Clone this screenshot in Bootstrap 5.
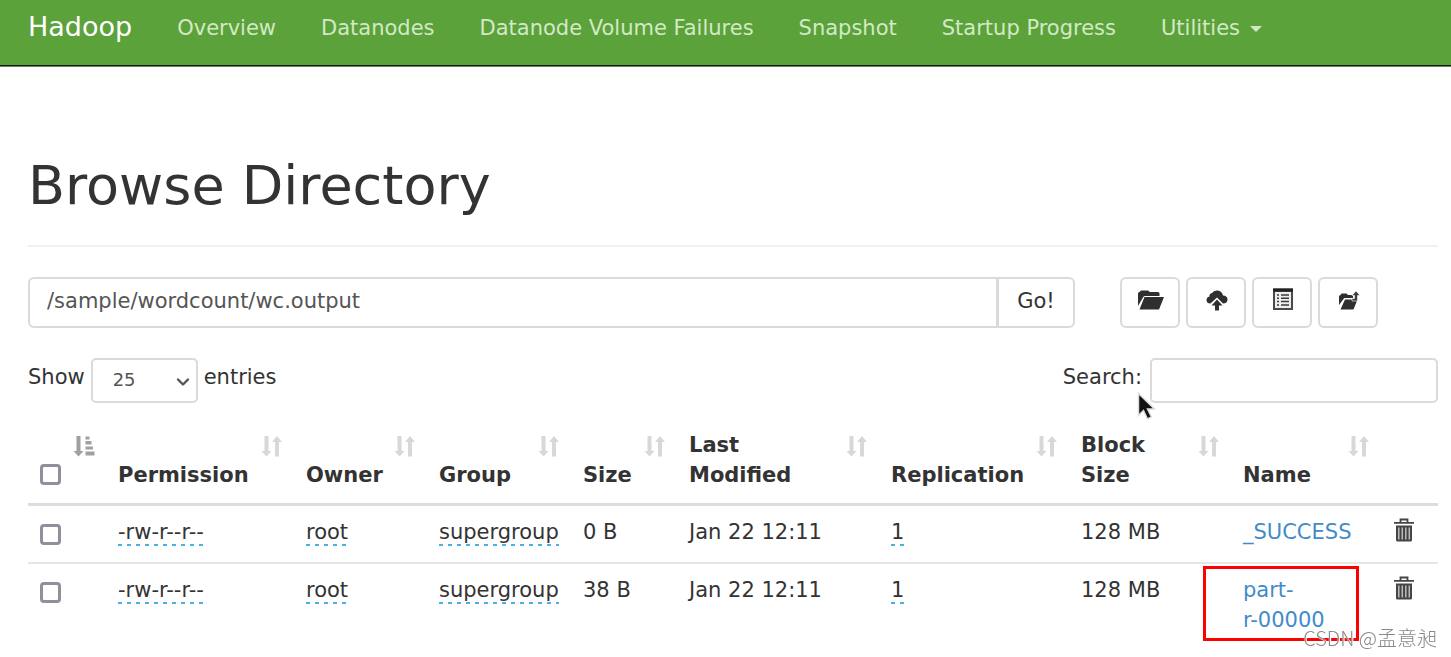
<!DOCTYPE html>
<html lang="en">
<head>
<meta charset="utf-8">
<meta name="viewport" content="width=device-width, initial-scale=1">
<title>Browsing HDFS</title>
<link href="https://cdn.jsdelivr.net/npm/bootstrap@5.3.0/dist/css/bootstrap.min.css" rel="stylesheet">
<style>
  body { font-family: "DejaVu Sans", sans-serif; font-size: 21px; line-height: 30px; color: #333; background: #fff; }
  .page-pad { padding-left: 28px; padding-right: 13px; }
  .topbar { background: #5ca23a; border-bottom: 1px solid #10240a; box-shadow: 0 1px 0 #777; padding-top: 0; padding-bottom: 0; height: 66px; align-items: flex-start; }
  .topbar .navbar-brand { font-size: 27px; line-height: 30px; color: #fff; padding: 12px 0; margin: 0 45px 0 0; }
  .topbar .navbar-nav { gap: 45px; }
  .topbar .navbar-nav .nav-link { color: #d3e9c6; padding: 13px 0; }
  .topbar .dropdown-toggle::after { border-top: 6px solid; border-left: 6px solid transparent; border-right: 6px solid transparent; border-bottom: 0; margin-left: 10px; vertical-align: 3px; }
  h1 { font-size: 54px; line-height: 60px; font-weight: 400; margin: 90px 0 0; padding-bottom: 29px; border-bottom: 2px solid #f0f0f0; }
  .pathbar { display: grid; grid-template-columns: 1047fr 318fr; column-gap: 45px; margin-top: 30px; }
  .pathbar .form-control, .pathbar .btn { height: 51px; font-size: 21px; line-height: 30px; border: 2px solid #dadada; color: #333; border-radius: 6px; background: #fff; }
  .pathbar .form-control { padding: 6px 17px 9px; color: #555; border-top-right-radius: 0; border-bottom-right-radius: 0; }
  .pathbar .go-btn { width: 78px; padding: 6px 0 9px; border-top-left-radius: 0; border-bottom-left-radius: 0; margin-left: -2px; }
  .pathbar .tool-btn { width: 60px; padding: 9px 0 0 2px; display: flex; justify-content: center; }
  .tools { gap: 6px; }
  .filters { margin-top: 30px; line-height: 39px; }
  .filters .form-select, .filters .form-control { height: 45px; font-size: 18px; line-height: 27px; color: #555; border: 2px solid #dadada; border-radius: 5px; background-color: #fff; }
  .filters .form-select { width: 107px; padding: 6px 20px 8px; background-image: none; }
  .filters .form-control { width: 288px; }
  .select-wrap { position: relative; line-height: 0; margin: 0 6px; }
  .select-wrap svg { position: absolute; right: 8px; top: 17px; pointer-events: none; }
  .pointer-arrow { position: absolute; left: 74px; top: 34px; }
  .files { table-layout: fixed; color: #333; margin: 27px 0 0; width: 100%; }
  .files > thead > tr > th { position: relative; vertical-align: bottom; padding: 0 34px 13px 12px; border-bottom: 3px solid #ddd; font-weight: 700; background: none; box-shadow: none; color: #333; }
  .files > tbody > tr > td { vertical-align: top; padding: 11px 8px 15px 12px; border-bottom: 2px solid #e6e6e6; color: #333; box-shadow: none; background: none; white-space: nowrap; }
  .files > tbody > tr:last-child > td { border-bottom: 0; }
  .files > thead > tr > th svg { position: absolute; right: 11px; top: 5px; }
  .files .form-check-input { display: block; width: 21px; height: 21px; margin: 7px 0 0; border: 3px solid #8f8f9d; border-radius: 4px; }
  .files thead .form-check-input { margin: 0 0 5px; }
  .files a { color: #428bca; text-decoration: none; }
  .files .editable { display: inline-block; line-height: 27px; color: #333; padding: 1px 0 0; background: repeating-linear-gradient(90deg, #4bb0e0 0 4px, transparent 4px 9px) 0 100% / 100% 2px no-repeat; }
  .files .name-cell { position: relative; }
  .highlight-box { position: absolute; left: -28px; right: 22px; top: 2px; height: 75px; border: 3px solid #f00; pointer-events: none; }
  .trash-btn { display: block; border: 0; background: none; padding: 1px 0 0 1px; line-height: 0; }
  .watermark { position: fixed; right: 14px; bottom: 4px; font-family: "Noto Sans CJK SC", sans-serif; font-weight: 300; font-size: 20px; line-height: 30px; color: #888; text-shadow: 0 0 1px #fff, 1px 1px 0 #fff; }
</style>
</head>
<body>
<svg width="0" height="0" class="position-absolute" aria-hidden="true">
  <symbol id="sort-both" viewBox="0 0 22 22"><path fill="#d8d8d8" d="M3.500 1h4v15h3l-5 5.500-5-5.500h3zM14 21.500V7h-3l5-6 5 6h-3v14.500z"/></symbol>
  <symbol id="sort-asc" viewBox="0 0 22 22"><path fill="#a0a0a0" d="M3.500 1h4v15h3l-5 5.500-5-5.500h3zM12.500 1.500h4v3h-4zM12.500 6h6v3.500h-6zM12.500 11.500h7.500v3h-7.500zM12.500 16.500h9v4h-9z"/></symbol>
  <symbol id="trash" viewBox="0 0 20 24">
    <path fill="none" stroke="#444" stroke-width="1.800" d="M6.500 4V1.500h7V4M0 4.800h20"/>
    <path fill="#444" d="M2 7.500h16V22q0 1.500-1.500 1.500h-13Q2 23.500 2 22z"/>
    <path stroke="#bbb" stroke-width="1.500" d="M4.800 9.500v12M8.300 9.500v12M11.800 9.500v12M15.300 9.500v12"/>
  </symbol>
</svg>

<nav class="navbar navbar-expand topbar page-pad">
  <a class="navbar-brand" href="#">Hadoop</a>
  <ul class="navbar-nav">
    <li class="nav-item"><a class="nav-link" href="#">Overview</a></li>
    <li class="nav-item"><a class="nav-link" href="#">Datanodes</a></li>
    <li class="nav-item"><a class="nav-link" href="#">Datanode Volume Failures</a></li>
    <li class="nav-item"><a class="nav-link" href="#">Snapshot</a></li>
    <li class="nav-item"><a class="nav-link" href="#">Startup Progress</a></li>
    <li class="nav-item dropdown"><a class="nav-link dropdown-toggle" href="#" role="button" data-bs-toggle="dropdown">Utilities</a></li>
  </ul>
</nav>

<main class="page-pad">
  <h1>Browse Directory</h1>

  <div class="pathbar">
    <div class="input-group flex-nowrap">
      <input type="text" class="form-control" aria-label="Directory" value="/sample/wordcount/wc.output">
      <button type="button" class="btn go-btn">Go!</button>
    </div>
    <div class="d-flex tools">
      <button type="button" class="btn tool-btn" aria-label="Create directory">
        <svg width="28" height="24" viewBox="0 0 28 24"><path fill="#2f2f2f" d="M1 18V5.500Q1 4 2.500 4L4 2.500h7l2 1.500h8q1.500 0 1.500 1.500V8H8q-1.500 0-2 1.500zM7.500 9H27L22 21.500H2.500z"/></svg>
      </button>
      <button type="button" class="btn tool-btn" aria-label="Upload files">
        <svg width="22" height="24" viewBox="0 0 22 24"><path fill="#2f2f2f" d="M4.500 15.500Q.5 15.500 .5 12q0-3 3-3.500-.5-3 2.500-3.500Q8 2 11.500 2.500q4.500.5 5.500 5 4.500.3 4.500 4 0 4-4.500 4L11 9.500z"/><path fill="#2f2f2f" d="M11 11.500l5.500 6H13v5H9v-5H5.500z"/></svg>
      </button>
      <button type="button" class="btn tool-btn" aria-label="Cut and paste">
        <svg width="20" height="24" viewBox="0 0 20 24"><path fill="#4a4a4a" d="M0 .500h20v21.500H0z"/><path fill="#222" d="M0 .500h20v3H0z"/><path fill="#eee" d="M2 4h16v16H2z"/><path stroke="#3b3b3b" stroke-width="1.500" d="M4 7h2M8 7h8M4 10.300h2M8 10.300h8M4 13.600h2M8 13.600h8M4 17h2M8 17h8"/></svg>
      </button>
      <button type="button" class="btn tool-btn" aria-label="Parent directory">
        <svg width="22" height="24" viewBox="0 0 22 24"><path fill="#2f2f2f" d="M1 17V8.500Q1 7 2.500 7L3.500 5.500h5L10 7h5v3H7q-1 0-1.500 1zM7 11.500h12.500L15.500 21.500H2.500z"/><path fill="#3b3b3b" stroke="#fff" stroke-width=".6" d="M18 3l4 4.500h-2.500V13H14v-2.500h2.500v-3H14z"/></svg>
      </button>
    </div>
  </div>

  <div class="filters d-flex justify-content-between align-items-start">
    <div class="d-flex">
      <label for="len">Show</label>
      <div class="select-wrap">
        <select id="len" class="form-select"><option>25</option><option>50</option><option>100</option></select>
        <svg width="14" height="14" viewBox="0 0 14 14"><path fill="none" stroke="#555" stroke-width="2.400" stroke-linecap="round" stroke-linejoin="round" d="M2 4.500L7 9.500l5-5"/></svg>
      </div>
      <label for="len">entries</label>
    </div>
    <div class="d-flex position-relative">
      <label for="find" class="me-2">Search:</label>
      <input id="find" type="search" class="form-control">
      <svg class="pointer-arrow" width="22" height="30" viewBox="0 0 22 30" aria-hidden="true"><path fill="#111" stroke="#ddd" stroke-width="1.500" d="M1.500 1.500v22l5-5 4 8.500 4-2-4-8h7z"/></svg>
    </div>
  </div>

  <table class="table files">
    <colgroup>
      <col style="width:78px"><col style="width:188px"><col style="width:133px"><col style="width:144px"><col style="width:106px"><col style="width:202px"><col style="width:190px"><col style="width:162px"><col style="width:150px"><col style="width:57px">
    </colgroup>
    <thead>
      <tr>
        <th><input class="form-check-input" type="checkbox" aria-label="Select all"><svg width="22" height="22"><use href="#sort-asc"/></svg></th>
        <th>Permission<svg width="22" height="22"><use href="#sort-both"/></svg></th>
        <th>Owner<svg width="22" height="22"><use href="#sort-both"/></svg></th>
        <th>Group<svg width="22" height="22"><use href="#sort-both"/></svg></th>
        <th>Size<svg width="22" height="22"><use href="#sort-both"/></svg></th>
        <th>Last Modified<svg width="22" height="22"><use href="#sort-both"/></svg></th>
        <th>Replication<svg width="22" height="22"><use href="#sort-both"/></svg></th>
        <th>Block Size<svg width="22" height="22"><use href="#sort-both"/></svg></th>
        <th>Name<svg width="22" height="22"><use href="#sort-both"/></svg></th>
        <th></th>
      </tr>
    </thead>
    <tbody>
      <tr>
        <td><input class="form-check-input" type="checkbox" aria-label="Select _SUCCESS"></td>
        <td><span class="editable">-rw-r--r--</span></td>
        <td><span class="editable">root</span></td>
        <td><span class="editable">supergroup</span></td>
        <td>0 B</td>
        <td>Jan 22 12:11</td>
        <td><span class="editable">1</span></td>
        <td>128 MB</td>
        <td><a href="#">_SUCCESS</a></td>
        <td><button type="button" class="trash-btn" aria-label="Delete _SUCCESS"><svg width="20" height="24"><use href="#trash"/></svg></button></td>
      </tr>
      <tr>
        <td><input class="form-check-input" type="checkbox" aria-label="Select part-r-00000"></td>
        <td><span class="editable">-rw-r--r--</span></td>
        <td><span class="editable">root</span></td>
        <td><span class="editable">supergroup</span></td>
        <td>38 B</td>
        <td>Jan 22 12:11</td>
        <td><span class="editable">1</span></td>
        <td>128 MB</td>
        <td class="name-cell"><a href="#">part-<br>r-00000</a><span class="highlight-box"></span></td>
        <td><button type="button" class="trash-btn" aria-label="Delete part-r-00000"><svg width="20" height="24"><use href="#trash"/></svg></button></td>
      </tr>
    </tbody>
  </table>
</main>
<div class="watermark">CSDN @孟意昶</div>
<script src="https://cdn.jsdelivr.net/npm/bootstrap@5.3.0/dist/js/bootstrap.bundle.min.js"></script>
</body>
</html>
